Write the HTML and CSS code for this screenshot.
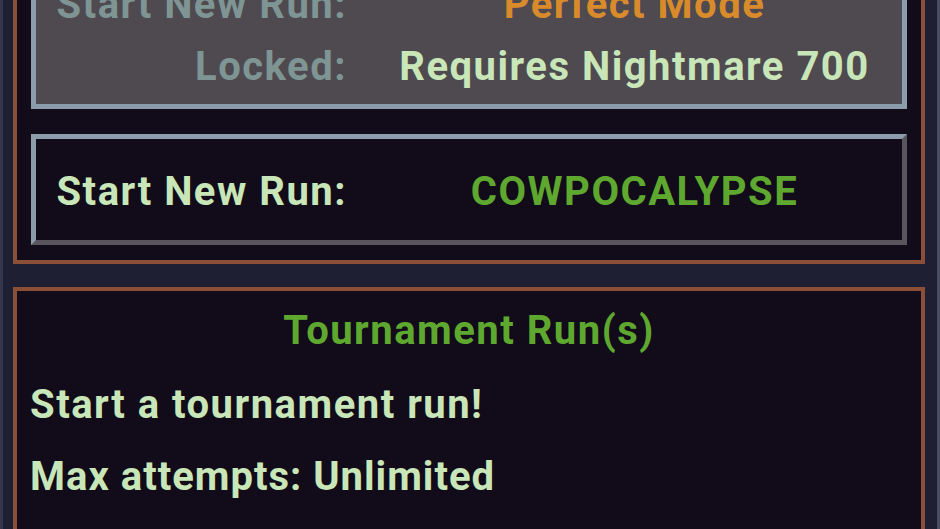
FILE: index.html
```html
<!DOCTYPE html>
<html lang="en">
<head>
  <meta charset="UTF-8" />
  <meta name="viewport" content="width=device-width, initial-scale=1.0" />
  <title>Run Select</title>
  <link rel="stylesheet" href="styles.css">
</head>
<body>
  <div class="screen">
    <div class="frame">
      <div class="run-btn locked">
        <div class="run-row">
          <span class="label">Start New Run:</span>
          <span class="value mode">Perfect Mode</span>
        </div>
        <div class="run-row">
          <span class="label">Locked:</span>
          <span class="value">Requires Nightmare 700</span>
        </div>
      </div>
      <div class="run-btn active">
        <div class="run-row single">
          <span class="label">Start New Run:</span>
          <span class="value event">COWPOCALYPSE</span>
        </div>
      </div>
    </div>

    <div class="frame tournament">
      <div class="title">Tournament Run(s)</div>
      <div class="line">Start a tournament run!</div>
      <div class="line">Max attempts: Unlimited</div>
    </div>
  </div>
</body>
</html>
```

FILE: styles.css
```css
html, body {
  margin: 0;
  padding: 0;
  height: 100%;
  overflow: hidden;
}
body {
  background: #1e1f33;
  border-left: 3px solid #34374c;
  border-right: 3px solid #4a4d62;
  box-sizing: border-box;
  font-family: Roboto, 'Liberation Sans', sans-serif;
  font-weight: 700;
  font-size: 40px;
  letter-spacing: 1.5px;
  color: #c9e6b9;
}
.screen {
  margin-top: -58px;
  padding: 0 12px 0 10px;
}
.frame {
  background: #120b1a;
  border: 4px solid #8a4f36;
  padding: 14px 14px 15px 14px;
}
.frame + .frame {
  margin-top: 23px;
}
.run-btn {
  border: 5px solid;
}
.run-btn.locked {
  background: #4e4a50;
  border-color: #8c9cab;
  padding: 8px 0 7px;
}
.run-btn.locked .label {
  color: #7f9594;
}
.run-btn.active {
  margin-top: 25px;
  background: #120b1a;
  border-color: #8c9cab #58565c #58565c #8c9cab;
  padding-top: 4px;
}
.run-row {
  display: grid;
  grid-template-columns: 311px 1fr;
  align-items: center;
  height: 62px;
}
.run-row.single {
  height: 97px;
}
.label {
  text-align: right;
}
.value {
  margin-left: 20px;
  text-align: center;
}
.mode {
  color: #d98a2b;
}
.event {
  color: #5fa82f;
}
.tournament {
  padding: 14px 13px 0;
  height: 260px;
}
.title {
  color: #5fa82f;
  text-align: center;
  line-height: 52px;
  margin-bottom: 12px;
}
.line {
  line-height: 72px;
}
.line + .line {
  letter-spacing: 1px;
}
```
